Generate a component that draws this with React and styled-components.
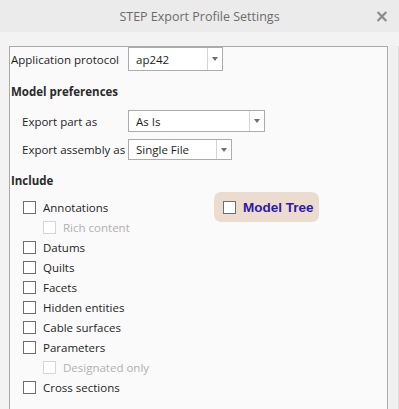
import React from "react";
import styled, { createGlobalStyle } from "styled-components";

const Global = createGlobalStyle`
  html, body { margin: 0; padding: 0; }
  body {
    width: 399px; height: 409px; overflow: hidden;
    background: #f0f0f0;
    font-family: "Open Sans", "Noto Sans", sans-serif;
    font-size: 11.5px;
    color: #222;
  }
`;

const Window = styled.div`
  width: 399px; height: 409px;
  display: flex; flex-direction: column;
  background: #f0f0f0;
  overflow: hidden;
`;

const TitleBar = styled.div`
  height: 32px; flex: 0 0 32px;
  display: flex; align-items: center; justify-content: center;
  position: relative;
  background: #ebebeb;
  color: #6b6b6b;
  font-size: 12.5px;
`;

const Close = styled.span`
  position: absolute; right: 10px; top: 6px;
  font-family: "DejaVu Sans", sans-serif;
  font-size: 17px; font-weight: bold; color: #8a8a8a;
`;

const Body = styled.div`
  flex: 1;
  display: flex;
  padding: 14px 0 0 9px;
  background: #f3f3f3;
`;

const Panel = styled.div`
  width: 376px;
  border: 1px solid #a9a9a9;
  border-bottom: none;
  background: #fafafa;
  padding: 0 0 0 1px;
`;

const RightStrip = styled.div`
  flex: 1;
  margin-left: 2px;
  border-right: 1px solid #dcdcdc;
  background: #f0f0f0;
`;

const Row = styled.div`
  display: flex; align-items: center;
  height: ${(p) => p.$h || 23}px;
  margin-top: ${(p) => p.$mt || 0}px;
  padding-left: ${(p) => p.$indent || 0}px;
`;

const Label = styled.span`
  width: ${(p) => p.$w}px;
  flex: 0 0 auto;
  white-space: nowrap;
  color: #1e1e1e;
`;

const Heading = styled.div`
  font-weight: bold;
  color: #2a2a2a;
  height: 20px;
  display: flex; align-items: center;
  margin-top: ${(p) => p.$mt || 0}px;
`;

const SelectBox = styled.div`
  width: ${(p) => p.$w}px;
  height: ${(p) => p.$h || 21}px;
  box-sizing: border-box;
  border: 1px solid #acacac;
  background: #ffffff;
  display: flex; align-items: stretch;
`;

const SelectValue = styled.span`
  flex: 1;
  display: flex; align-items: center;
  padding-left: 7px;
  color: #1e1e1e;
`;

const SelectArrow = styled.span`
  width: 14px;
  border-left: 1px solid #d4d4d4;
  display: flex; align-items: center; justify-content: center;
  &::after {
    content: "";
    border-left: 3.5px solid transparent;
    border-right: 3.5px solid transparent;
    border-top: 4px solid #707070;
  }
`;

const Box = styled.span`
  width: 11px; height: 11px;
  border: 1px solid ${(p) => (p.$disabled ? "#d6d6d6" : "#6e6e6e")};
  background: #fff;
  flex: 0 0 auto;
  margin-right: 7px;
`;

const CheckRow = styled.div`
  display: flex; align-items: center;
  height: 20px;
  padding-left: ${(p) => (p.$sub ? 32 : 12)}px;
  color: ${(p) => (p.$disabled ? "#b0b0b0" : "#1e1e1e")};
`;

const IncludeArea = styled.div`
  position: relative;
  padding-top: 7px;
`;

const Badge = styled.div`
  position: absolute;
  left: 203px; top: 2px;
  width: 105px; height: 30px;
  box-sizing: border-box;
  border-radius: 7px;
  background: #ecdcd0;
  display: flex; align-items: center;
  padding-left: 9px;
  font-family: "Liberation Sans", Arial, sans-serif;
  font-weight: bold;
  font-size: 13.5px;
  color: #2b1aa6;
`;

function Select({ value, w, h }) {
  return (
    <SelectBox $w={w} $h={h}>
      <SelectValue>{value}</SelectValue>
      <SelectArrow />
    </SelectBox>
  );
}

const items = [
  { t: "Annotations" },
  { t: "Rich content", sub: true, dis: true },
  { t: "Datums" },
  { t: "Quilts" },
  { t: "Facets" },
  { t: "Hidden entities" },
  { t: "Cable surfaces" },
  { t: "Parameters" },
  { t: "Designated only", sub: true, dis: true },
  { t: "Cross sections" },
];

export default function App() {
  return (
    <>
      <Global />
      <Window>
        <TitleBar>
          STEP Export Profile Settings
          <Close>×</Close>
        </TitleBar>
        <Body>
          <Panel>
            <Row $h={24}>
              <Label $w={117}>Application protocol</Label>
              <Select value="ap242" w={95} h={24} />
            </Row>
            <Heading $mt={10}>Model preferences</Heading>
            <Row $mt={9} $h={22} $indent={11}>
              <Label $w={106}>Export part as</Label>
              <Select value="As Is" w={137} h={22} />
            </Row>
            <Row $mt={7} $h={21} $indent={11}>
              <Label $w={106}>Export assembly as</Label>
              <Select value="Single File" w={104} h={21} />
            </Row>
            <Heading $mt={10}>Include</Heading>
            <IncludeArea>
              {items.map((it) => (
                <CheckRow key={it.t} $sub={it.sub} $disabled={it.dis}>
                  <Box $disabled={it.dis} />
                  {it.t}
                </CheckRow>
              ))}
              <Badge>
                <Box />
                Model Tree
              </Badge>
            </IncludeArea>
          </Panel>
          <RightStrip />
        </Body>
      </Window>
    </>
  );
}
